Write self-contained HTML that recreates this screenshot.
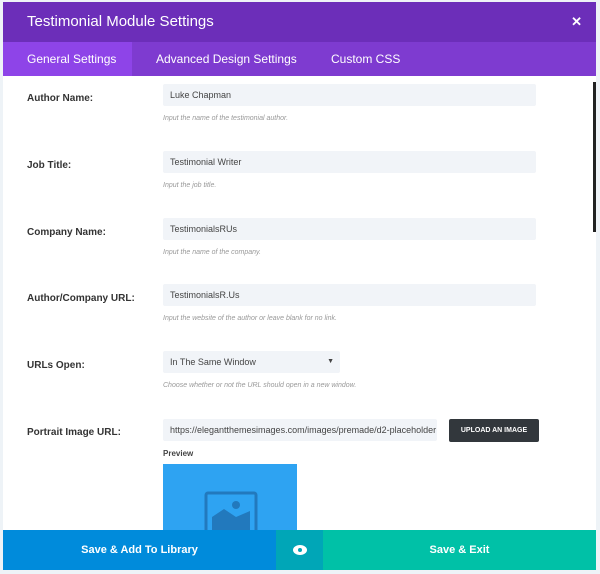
<!DOCTYPE html><html><head><style>
body{margin:0;width:600px;height:574px;background:#eef3f7;font-family:"Liberation Sans",sans-serif;position:relative;overflow:hidden}
.m{position:absolute;left:3px;top:2px;width:593px;height:568px;background:#fff;overflow:hidden}
.h{height:40px;background:#6c2eb9;color:#fff;font-size:15px;line-height:40px;padding-left:24px}
.x{position:absolute;right:14px;top:0;color:#fff;font-size:13px;font-weight:bold;line-height:40px}
.t{height:34px;background:#7e3bd0;position:relative;color:#fff;font-size:12px;line-height:34px}
.t div{position:absolute;top:0;white-space:nowrap}
.l{position:absolute;left:24px;font-size:10px;font-weight:bold;color:#333}
.i{position:absolute;left:160px;width:373px;height:22px;background:#f1f4f8;border-radius:2px;font-size:9px;color:#444;line-height:22px;padding-left:7px;box-sizing:border-box;white-space:nowrap;overflow:hidden}
.d{position:absolute;left:160px;font-size:7px;font-style:italic;color:#999}
.f{position:absolute;top:528px;height:40px;color:#fff;font-weight:bold;font-size:11px;line-height:40px;text-align:center}
</style></head><body><div class="m">
<div class="h">Testimonial Module Settings</div><div class="x">✕</div>
<div class="t"><div style="left:0;width:129px;height:34px;background:#8e44e8"></div><div style="left:24px">General Settings</div><div style="left:153px">Advanced Design Settings</div><div style="left:328px">Custom CSS</div></div>
<div style="position:absolute;left:590px;top:80px;width:3px;height:150px;background:#222"></div>
<div class="l" style="top:91px">Author Name:</div><div class="i" style="top:82px">Luke Chapman</div><div class="d" style="top:113px">Input the name of the testimonial author.</div>
<div class="l" style="top:158px">Job Title:</div><div class="i" style="top:149px">Testimonial Writer</div><div class="d" style="top:180px">Input the job title.</div>
<div class="l" style="top:225px">Company Name:</div><div class="i" style="top:216px">TestimonialsRUs</div><div class="d" style="top:247px">Input the name of the company.</div>
<div class="l" style="top:291px">Author/Company URL:</div><div class="i" style="top:282px">TestimonialsR.Us</div><div class="d" style="top:313px">Input the website of the author or leave blank for no link.</div>
<div class="l" style="top:358px">URLs Open:</div><div class="i" style="top:349px;width:177px">In The Same Window<span style="position:absolute;right:6px;font-size:7px">▼</span></div><div class="d" style="top:380px">Choose whether or not the URL should open in a new window.</div>
<div class="l" style="top:425px">Portrait Image URL:</div><div class="i" style="top:417px;width:274px">https://elegantthemesimages.com/images/premade/d2-placeholder</div>
<div style="position:absolute;left:446px;top:417px;width:90px;height:23px;background:#32373c;border-radius:2px;color:#fff;font-size:7px;font-weight:bold;text-align:center;line-height:23px">UPLOAD AN IMAGE</div>
<div style="position:absolute;left:160px;top:447px;font-size:8px;font-weight:bold;color:#444">Preview</div>
<div style="position:absolute;left:160px;top:462px;width:134px;height:70px;background:#2ea3f2">
<svg style="position:absolute;left:41px;top:27px" width="54" height="45" viewBox="0 0 54 45"><rect x="2" y="2" width="50" height="43" rx="2" fill="none" stroke="#2279bd" stroke-width="3"/><circle cx="32" cy="14" r="4" fill="#2279bd"/><path d="M8 26 L20 18 L32 26 L46 20 L46 45 L8 45Z" fill="#2279bd"/></svg></div>
<div class="f" style="left:0;width:273px;background:#008bdb">Save &amp; Add To Library</div>
<div class="f" style="left:273px;width:47px;background:#00a6b7"><svg width="14" height="10" viewBox="0 0 14 10" style="vertical-align:middle"><ellipse cx="7" cy="5" rx="7" ry="5" fill="#fff"/><circle cx="7" cy="5" r="2" fill="#00a6b7"/></svg></div>
<div class="f" style="left:320px;width:273px;background:#00c1a7">Save &amp; Exit</div>
</div></body></html>
